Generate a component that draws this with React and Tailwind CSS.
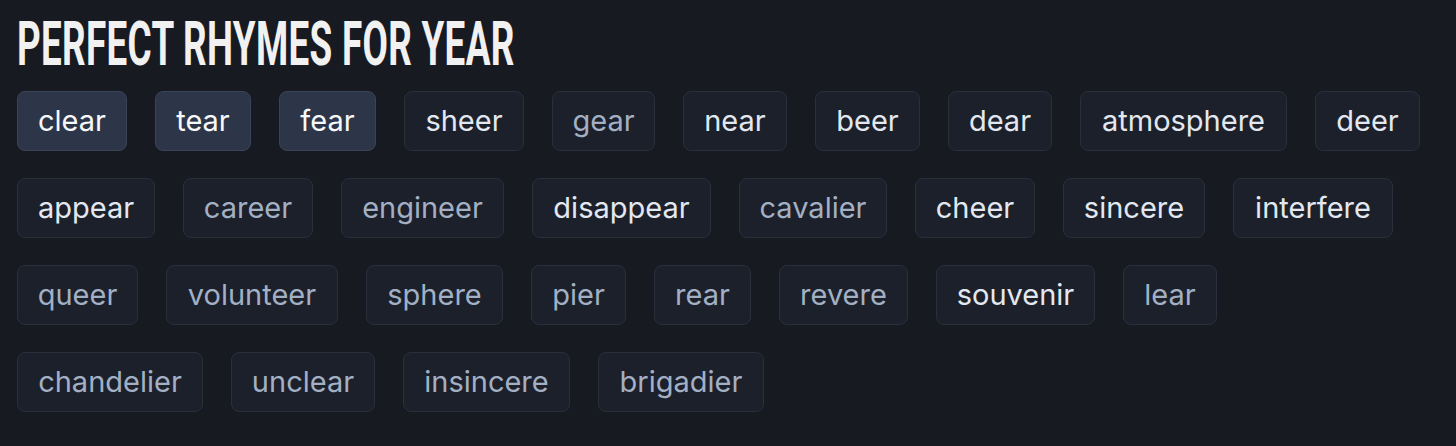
import React from "react";

const chips = [
  [
    ["clear", "hi", "w-[110px]"],
    ["tear", "hi", "w-[96px]"],
    ["fear", "hi", "w-[97px]"],
    ["sheer", "br", "w-[120px]"],
    ["gear", "dim", "w-[103px]"],
    ["near", "br", "w-[104px]"],
    ["beer", "br", "w-[105px]"],
    ["dear", "br", "w-[104px]"],
    ["atmosphere", "br", "w-[207px]"],
    ["deer", "br", "w-[105px]"],
  ],
  [
    ["appear", "br", "w-[138px]"],
    ["career", "dim", "w-[130px]"],
    ["engineer", "dim", "w-[163px]"],
    ["disappear", "br", "w-[179px]"],
    ["cavalier", "dim", "w-[148px]"],
    ["cheer", "br", "w-[120px]"],
    ["sincere", "br", "w-[142px]"],
    ["interfere", "br", "w-[160px]"],
  ],
  [
    ["queer", "dim", "w-[121px]"],
    ["volunteer", "dim", "w-[172px]"],
    ["sphere", "dim", "w-[137px]"],
    ["pier", "dim", "w-[95px]"],
    ["rear", "dim", "w-[97px]"],
    ["revere", "dim", "w-[129px]"],
    ["souvenir", "br", "w-[159px]"],
    ["lear", "dim", "w-[94px]"],
  ],
  [
    ["chandelier", "dim", "w-[186px]"],
    ["unclear", "dim", "w-[144px]"],
    ["insincere", "dim", "w-[167px]"],
    ["brigadier", "dim", "w-[166px]"],
  ],
].flat();

const styles = {
  hi: "bg-[#2d3648] border-[#3a4457] text-[#f7f8fa]",
  br: "bg-[#1c202b] border-[#2a2f3b] text-[#e3e8f0]",
  dim: "bg-[#1c202b] border-[#2a2f3b] text-[#a3b0c4]",
};

export default function App() {
  return (
    <div className="w-[1456px] h-[446px] bg-[#181a22] overflow-hidden px-[17px] pt-[14px]">
      <h1
        className="origin-left scale-x-[0.604] text-[61px] leading-[60px] font-bold tracking-[0.5px] text-[#f1f1f1] uppercase whitespace-nowrap"
        style={{ fontFamily: "Roboto, 'Liberation Sans', sans-serif" }}
      >
        Perfect Rhymes for Year
      </h1>
      <div className="mt-[17px] w-[1410px] flex flex-wrap gap-x-[28px] gap-y-[27px]">
        {chips.map(([word, kind, w]) => (
          <div
            key={word}
            className={`h-[60px] ${w} flex items-center justify-center rounded-[8px] border text-[29px] ${styles[kind]}`}
            style={{ fontFamily: "Inter, 'Liberation Sans', sans-serif" }}
          >
            {word}
          </div>
        ))}
      </div>
    </div>
  );
}
